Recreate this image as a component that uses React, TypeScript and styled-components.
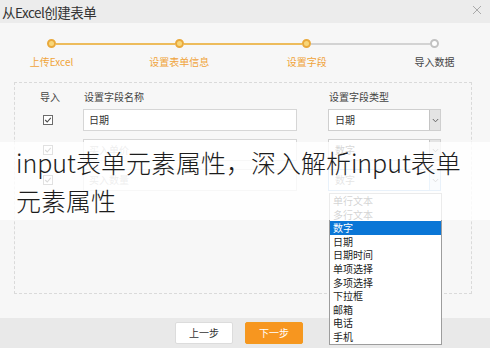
import React from 'react';
import styled, { createGlobalStyle } from 'styled-components';

const Global = createGlobalStyle`
  html, body { margin: 0; padding: 0; }
  body {
    width: 490px; height: 348px; overflow: hidden; background: #f7f7f7;
    font-family: "Noto Sans CJK SC", "Noto Sans", sans-serif;
  }
`;

const Dialog = styled.div`
  position: relative;
  width: 490px;
  height: 348px;
  display: flex;
  flex-direction: column;
  background: #f7f7f7;
`;

const TitleBar = styled.div`
  flex: none;
  height: 23px;
  background: #ececec;
  display: flex;
  align-items: center;
  justify-content: space-between;
  padding: 0 8px 0 2px;
`;

const Title = styled.div`
  font-size: 13.5px;
  line-height: 20px;
  color: #333;
  letter-spacing: -0.5px;
`;

const Close = styled.svg`
  width: 10px;
  height: 10px;
  margin-top: -4px;
`;

const Body = styled.div`
  flex: 1;
  display: flex;
  flex-direction: column;
`;

const Stepper = styled.div`
  flex: none;
  height: 59px;
  box-sizing: border-box;
  padding-top: 16px;
`;

const Track = styled.div`
  display: flex;
  align-items: center;
  margin-left: 47px;
  width: 392px;
  height: 9px;
`;

const Dot = styled.span<{ $active: boolean }>`
  flex: none;
  width: 9px;
  height: 9px;
  box-sizing: border-box;
  border-radius: 50%;
  border: 2px solid ${(p) => (p.$active ? '#e9a93c' : '#c2c2c2')};
  background: ${(p) => (p.$active ? '#f8d77a' : '#fff')};
`;

const Line = styled.span<{ $active: boolean }>`
  flex: 1;
  height: 2px;
  background: ${(p) => (p.$active ? '#edbc5c' : '#d3d3d3')};
`;

const Labels = styled.div`
  display: flex;
  gap: 47.67px;
  margin: 8px 0 0 11.5px;
`;

const Label = styled.span<{ $active: boolean }>`
  width: 80px;
  text-align: center;
  font-size: 10px;
  line-height: 12px;
  color: ${(p) => (p.$active ? '#f0a43a' : '#444')};
`;

const FieldBox = styled.div`
  flex: none;
  margin-left: 14px;
  width: 458px;
  height: 212px;
  box-sizing: border-box;
  border: 1px dashed #dadada;
  padding: 8px 0 0 24px;
`;

const Columns = styled.div`
  display: grid;
  grid-template-columns: 44px 245px 113px;
  align-items: center;
`;

const HeaderRow = styled(Columns)`
  height: 12px;
  font-size: 10px;
  line-height: 12px;
  color: #444;
`;

const HeadCell = styled.span`
  padding-left: 1px;
`;

const RowList = styled.div`
  display: flex;
  flex-direction: column;
  gap: 8px;
  margin-top: 6px;
`;

const Row = styled(Columns)`
  height: 22px;
`;

const CheckCell = styled.div`
  padding-left: 4px;
  display: flex;
  align-items: center;
`;

const TextInput = styled.div<{ $placeholder?: boolean }>`
  width: 214px;
  height: 22px;
  box-sizing: border-box;
  border: 1px solid #d6d6d6;
  background: #fff;
  padding-left: 5px;
  font-size: 10px;
  line-height: 20px;
  color: ${(p) => (p.$placeholder ? '#aaa' : '#333')};
`;

const Select = styled.div<{ $focus?: boolean }>`
  position: relative;
  width: 113px;
  height: 22px;
  box-sizing: border-box;
  border: 1px solid ${(p) => (p.$focus ? '#8ab9e6' : '#cfcfcf')};
  background: #fff;
  display: flex;
  font-size: 10px;
  line-height: 20px;
  color: #333;
`;

const SelectText = styled.span<{ $muted?: boolean }>`
  flex: 1;
  padding-left: 6px;
  color: ${(p) => (p.$muted ? '#777' : '#333')};
`;

const ArrowBox = styled.span<{ $focus?: boolean }>`
  flex: none;
  width: 11px;
  height: 100%;
  box-sizing: border-box;
  border-left: 1px solid ${(p) => (p.$focus ? '#9cc6ee' : '#c4c4c4')};
  background: ${(p) => (p.$focus ? '#e6f1fb' : '#e4e4e4')};
  display: flex;
  align-items: center;
  justify-content: center;
`;

const Dropdown = styled.ul`
  position: absolute;
  top: calc(100% + 3px);
  left: 0;
  z-index: 5;
  width: 113px;
  box-sizing: border-box;
  margin: 0;
  padding: 0;
  list-style: none;
  background: #fff;
  border: 1px solid #9d9d9d;
`;

const Option = styled.li<{ $selected?: boolean }>`
  height: 13.6px;
  line-height: 13.6px;
  padding-left: 3px;
  font-size: 10px;
  color: ${(p) => (p.$selected ? '#fff' : '#222')};
  background: ${(p) => (p.$selected ? '#0a76d6' : 'transparent')};
`;

const Footer = styled.div`
  flex: none;
  height: 30px;
  background: #e9e9e9;
  display: flex;
  align-items: center;
  gap: 12px;
  padding-left: 175px;
`;

const Button = styled.div<{ $primary?: boolean }>`
  width: 58px;
  height: 22px;
  box-sizing: border-box;
  border: 1px solid ${(p) => (p.$primary ? '#f39a1f' : '#dcdcdc')};
  background: ${(p) => (p.$primary ? '#f7961f' : '#fff')};
  color: ${(p) => (p.$primary ? '#fff' : '#333')};
  font-size: 10px;
  line-height: 20px;
  text-align: center;
  border-radius: 2px;
`;

const Overlay = styled.div`
  position: absolute;
  top: 142px;
  left: 0;
  right: 0;
  height: 78px;
  z-index: 10;
  box-sizing: border-box;
  padding: 1px 0 0 16px;
  background: rgba(255, 255, 255, 0.8);
  font-size: 25px;
  font-weight: 300;
  line-height: 38px;
  color: #1c1c1c;
`;

const CheckBox = () => (
  <svg width="10" height="10" viewBox="0 0 10 10">
    <rect x="0.5" y="0.5" width="9" height="9" fill="#fff" stroke="#6b6b6b" />
    <polyline points="2.2,5 4.2,7 7.8,2.8" fill="none" stroke="#4a4a4a" strokeWidth="1.1" />
  </svg>
);

const Chevron = () => (
  <svg width="7" height="5" viewBox="0 0 7 5">
    <polyline points="0.8,1 3.5,3.8 6.2,1" fill="none" stroke="#666" strokeWidth="1" />
  </svg>
);

const steps = ['上传Excel', '设置表单信息', '设置字段', '导入数据'];
const activeCount = 3;

const options = ['单行文本', '多行文本', '数字', '日期', '日期时间', '单项选择', '多项选择', '下拉框', '邮箱', '电话', '手机'];

const rows = [
  { name: '日期', placeholder: false, type: '日期' },
  { name: '买入单价', placeholder: true, type: '数字' },
  { name: '买入数量', placeholder: true, type: '数字', open: true },
];

export default function App() {
  return (
    <>
      <Global />
      <Dialog>
        <TitleBar>
          <Title>从Excel创建表单</Title>
          <Close viewBox="0 0 10 10">
            <path d="M1 1L9 9M9 1L1 9" stroke="#aaa" strokeWidth="1" />
          </Close>
        </TitleBar>
        <Body>
          <Stepper>
            <Track>
              {steps.map((s, i) => (
                <React.Fragment key={s}>
                  {i > 0 && <Line $active={i < activeCount} />}
                  <Dot $active={i < activeCount} />
                </React.Fragment>
              ))}
            </Track>
            <Labels>
              {steps.map((s, i) => (
                <Label key={s} $active={i < activeCount}>{s}</Label>
              ))}
            </Labels>
          </Stepper>
          <FieldBox>
            <HeaderRow>
              <HeadCell>导入</HeadCell>
              <HeadCell>设置字段名称</HeadCell>
              <HeadCell>设置字段类型</HeadCell>
            </HeaderRow>
            <RowList>
              {rows.map((r) => (
                <Row key={r.name}>
                  <CheckCell><CheckBox /></CheckCell>
                  <TextInput $placeholder={r.placeholder}>{r.name}</TextInput>
                  <Select $focus={r.open}>
                    <SelectText $muted={r.open}>{r.type}</SelectText>
                    <ArrowBox $focus={r.open}><Chevron /></ArrowBox>
                    {r.open && (
                      <Dropdown>
                        {options.map((o) => (
                          <Option key={o} $selected={o === r.type}>{o}</Option>
                        ))}
                      </Dropdown>
                    )}
                  </Select>
                </Row>
              ))}
            </RowList>
          </FieldBox>
        </Body>
        <Footer>
          <Button>上一步</Button>
          <Button $primary>下一步</Button>
        </Footer>
        <Overlay>
          input表单元素属性，深入解析input表单<br />元素属性
        </Overlay>
      </Dialog>
    </>
  );
}
